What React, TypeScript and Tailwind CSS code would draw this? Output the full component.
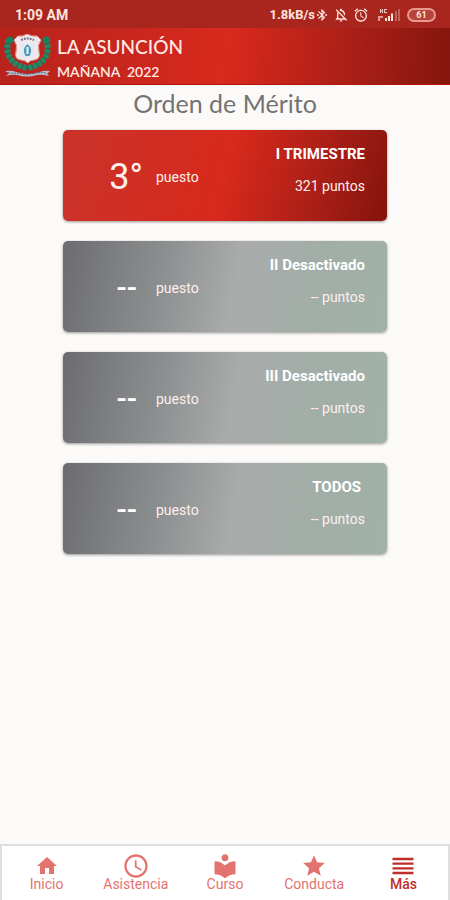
import { MdAccessTime, MdAlarm, MdBluetoothConnected, MdHome, MdLocalLibrary, MdOutlineNotificationsOff, MdReorder, MdStar } from "react-icons/md";

const results = [
    { title: "I TRIMESTRE", place: "3°", points: "321 puntos", active: true },
    { title: "II Desactivado", place: "--", points: "-- puntos", active: false },
    { title: "III Desactivado", place: "--", points: "-- puntos", active: false },
    { title: "TODOS", place: "--", points: "-- puntos", active: false, inset: true },
];

const tabs = [
    { label: "Inicio", icon: <MdHome className="w-6 h-6" />, active: false },
    { label: "Asistencia", icon: <MdAccessTime className="w-7 h-7" />, active: false },
    { label: "Curso", icon: <MdLocalLibrary className="w-7 h-7" />, active: false },
    { label: "Conducta", icon: <MdStar className="w-[26px] h-[26px]" />, active: false },
    { label: "Más", icon: <MdReorder className="w-7 h-7" />, active: true },
];

const StatusBar = () => (
    <div className="flex h-7 items-center justify-between bg-[#a8261e] pl-[15px] pr-3.5 pt-0.5 text-sm font-bold text-[#ffe4de]">
        <span>1:09 AM</span>
        <div className="flex items-center">
            <span className="text-[13px]">1.8kB/s</span>
            <MdBluetoothConnected className="w-3.5 h-4" />
            <MdOutlineNotificationsOff className="ml-1 w-4 h-4" />
            <MdAlarm className="ml-1 w-4 h-4" />
            <svg className="ml-2 w-6 h-4" viewBox="0 0 24 16" fill="currentColor" aria-hidden="true">
                <path d="M3 2h1v1.500h1V2h1v4H5V4.500H4V6H3zM7 2h3v1H8v2h2v1H7z" opacity=".85" />
                <path d="M1 9h5v2H3v3H1z" opacity=".6" />
                <path d="M8 11h2v3H8zM11 9h2v5h-2zM14 6.500h2V14h-2z" />
                <path d="M18 4h2v10h-2zM21 2h2v12h-2z" opacity=".3" />
            </svg>
            <span className="ml-1.5 flex h-3.5 w-[29px] items-center justify-center rounded-full border-2 border-[#e59a91] bg-[#b8433b] text-[9px] leading-none">61</span>
        </div>
    </div>
);

const Crest = () => (
    <svg className="h-11 w-[50px] shrink-0" viewBox="0 0 50 44" fill="none" role="img" aria-label="La Asunción">
        {/* laurel branches */}
        <path d="M6 6C1 18 7 31 24 34M43 6c5 12-1 25-18 28" stroke="#2f6a54" strokeWidth="4" />
        <path d="M6 6C1 18 7 31 24 34M43 6c5 12-1 25-18 28" stroke="#1f8c68" strokeWidth="6" strokeDasharray="3 2" />
        <path d="M8 10C5 19 11 28 24 31M41 10c3 9-3 18-16 21" stroke="#a63a30" strokeWidth="1" strokeDasharray="1 4" />
        <circle cx="7" cy="6" r="3.500" fill="#16805f" />
        <circle cx="43" cy="6" r="3.500" fill="#16805f" />
        {/* shield */}
        <path d="M15 2q5 1 9-2 5 3 10 2l4 4q-4 5-2 12 2 7-5 8-4 0-6 3-3-3-7-3-7-1-5-8 2-7-2-12z" fill="#f1e7ed" stroke="#d8a29d" />
        <path d="M18 6q6-3 13 0" stroke="#757083" strokeWidth="2" strokeDasharray="2 1" />
        <path d="M18 10h13v8q0 5-7 7-6-2-6-7z" fill="#dfedf2" />
        <path d="M24.500 10q-6 5-2 12h4q4-7-2-12z" fill="#5199bd" />
        <path d="M24.500 13v7" stroke="#eef5ee" strokeWidth="2" />
        {/* ribbon */}
        <path d="M2 37q7-1 11 1 12 4 24 0 4-2 10-1l-3 3 2 2q-8-2-12-1-10 3-20 0-5-1-11 1l3-3z" fill="#b9bccb" />
        <path d="M5 39q8 0 13 1 8 1 15-1 6-1 10 0" stroke="#476f89" strokeDasharray="2 1" />
    </svg>
);

const ResultCard = ({ result }: { result: (typeof results)[number] }) => {
    const background = result.active
        ? "bg-[linear-gradient(105deg,#c9332b_0%,#d8291c_50%,#a61e16_80%,#84140c_100%)]"
        : "bg-[linear-gradient(100deg,#6c6c70_0%,#8b8e8f_30%,#aaabab_53%,#a1aea7_78%,#a1b1a8_100%)]";

    return (
        <article className={`flex h-[91px] rounded-[5px] pr-[22px] text-[#fff0ed] shadow-[0_1px_3px_rgba(0,0,0,0.4)] ${background}`}>
            <div className="flex flex-1 items-center pt-0.5">
                <span className={`w-20 text-right ${result.active ? "text-4xl" : "pr-1.5 text-3xl font-medium text-white"}`}>{result.place}</span>
                <span className="ml-[13px] text-sm">puesto</span>
            </div>
            <div className="pt-3.5 text-right">
                <h2 className={`text-[15px] leading-5 font-bold text-white ${result.inset ? "pr-1" : ""}`}>{result.title}</h2>
                <p className="mt-3 text-sm leading-5">{result.points}</p>
            </div>
        </article>
    );
};

const App = () => {
    return (
        <div className="flex min-h-screen flex-col bg-[#fbfaf8] font-[Roboto,sans-serif]">
            <StatusBar />
            <header className="flex h-[57px] items-center gap-1 border-b border-[#b51208] bg-[linear-gradient(95deg,#b7231c_0%,#c9271e_30%,#da291d_50%,#a61e16_80%,#84160d_100%)] pl-[3px] font-[Lato,sans-serif] text-[#ffeae5]">
                <Crest />
                <div className="pt-1.5">
                    <h1 className="text-[19px] leading-[26px] font-medium">LA ASUNCIÓN</h1>
                    <p className="whitespace-pre text-sm leading-6 font-semibold">MAÑANA  2022</p>
                </div>
            </header>

            <main className="flex-1">
                <h2 className="pt-0.5 pb-0.5 text-center font-[Lato,sans-serif] text-[25px] leading-8 text-[#737373]">Orden de Mérito</h2>
                <div className="mx-auto mt-[9px] flex w-[72%] flex-col gap-5">
                    {results.map((result) => (
                        <ResultCard key={result.title} result={result} />
                    ))}
                </div>
            </main>

            <nav className="grid h-14 grid-cols-5 border-x-2 border-t-2 border-[#dedede] bg-white">
                {tabs.map((tab) => (
                    <button
                        key={tab.label}
                        type="button"
                        className={`flex flex-col items-center justify-start pt-1.5 text-sm leading-4 ${tab.active ? "font-medium text-[#bd2f2b]" : "text-[#e3736e]"}`}
                    >
                        <span className="-mb-1 flex h-7 items-center">{tab.icon}</span>
                        {tab.label}
                    </button>
                ))}
            </nav>
        </div>
    );
};

export default App;
